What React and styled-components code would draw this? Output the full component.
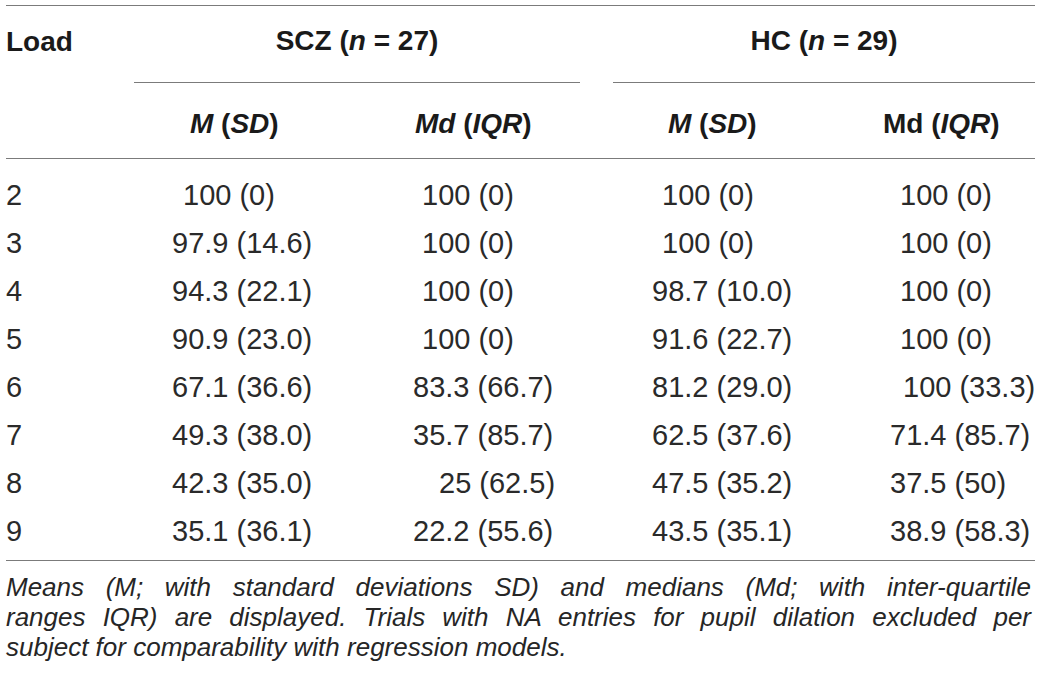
import React from 'react'
import styled, { createGlobalStyle } from 'styled-components'

const GlobalStyle = createGlobalStyle`
    html, body {
        margin: 0;
        padding: 0;
        background-color: #ffffff;
    }
    body {
        font-family: "Liberation Sans", Arial, Helvetica, sans-serif;
        color: #1c1c1c;
    }
`

// grid shared by header and body rows: Load | SCZ M | SCZ Md | gap | HC M | HC Md
const COLS = '128px 223px 223px 33px 211px 211px'

const Page = styled.div`
    width: 1029px;
    padding: 5px 6px 0 6px;
`

const Table = styled.div`
    border-top: 1px solid #7b7b7b;
    border-bottom: 1px solid #7b7b7b;
`

const Head = styled.div`
    display: grid;
    grid-template-columns: ${COLS};
    grid-template-rows: 77px 75px;
    border-bottom: 1px solid #7b7b7b;
    font-size: 28px;
    font-weight: 700;
    color: #1a1a1a;
`

const LoadHead = styled.div`
    display: flex;
    align-items: center;
    padding-bottom: 6px;
`

const Group = styled.div`
    grid-column: ${props => props.$col} / span 2;
    display: flex;
    align-items: center;
    justify-content: center;
    padding-bottom: 6px;
    border-bottom: 1px solid #7b7b7b;
`

const SubHead = styled.div`
    display: flex;
    align-items: center;
    padding-top: 7px;
    padding-left: ${props => props.$pad}px;
    white-space: nowrap;
`

const Body = styled.div`
    padding: 12px 0 5px 0;
`

const Row = styled.div`
    display: grid;
    grid-template-columns: ${COLS};
    height: 48px;
    align-items: center;
    font-size: 29px;
    color: #2a2a2a;
`

const Cell = styled.div`
    padding-left: ${props => props.$pad}px;
    white-space: nowrap;
`

const Note = styled.div`
    margin-top: 11px;
    padding-right: 4px;
    font-size: 26px;
    line-height: 30px;
    font-style: italic;
    color: #262626;
`

const NoteLine = styled.p`
    margin: 0;
    text-align: justify;
    text-align-last: ${props => props.$fill ? 'justify' : 'left'};
    white-space: nowrap;
`

const columns = [
    { head: <><i>M</i> (<i>SD</i>)</>, headPad: 56, dataPad: 38 },
    { head: <><i>Md</i> (<i>IQR</i>)</>, headPad: 58, dataPad: 56 },
    { head: <><i>M</i> (<i>SD</i>)</>, headPad: 55, dataPad: 39 },
    { head: <>Md (<i>IQR</i>)</>, headPad: 59, dataPad: 66 },
]

// each value: [text, extra indent in px]
const rows = [
    ['2', ['100 (0)', 11], ['100 (0)', 9], ['100 (0)', 10], ['100 (0)', 10]],
    ['3', ['97.9 (14.6)', 0], ['100 (0)', 9], ['100 (0)', 10], ['100 (0)', 10]],
    ['4', ['94.3 (22.1)', 0], ['100 (0)', 9], ['98.7 (10.0)', 0], ['100 (0)', 10]],
    ['5', ['90.9 (23.0)', 0], ['100 (0)', 9], ['91.6 (22.7)', 0], ['100 (0)', 10]],
    ['6', ['67.1 (36.6)', 0], ['83.3 (66.7)', 0], ['81.2 (29.0)', 0], ['100 (33.3)', 13]],
    ['7', ['49.3 (38.0)', 0], ['35.7 (85.7)', 0], ['62.5 (37.6)', 0], ['71.4 (85.7)', 0]],
    ['8', ['42.3 (35.0)', 0], ['25 (62.5)', 26], ['47.5 (35.2)', 0], ['37.5 (50)', 0]],
    ['9', ['35.1 (36.1)', 0], ['22.2 (55.6)', 0], ['43.5 (35.1)', 0], ['38.9 (58.3)', 0]],
]

const ValueCell = ({ col, value }) => (
    <Cell $pad={col.dataPad + value[1]}>{value[0]}</Cell>
)

const App = () => {
    return (
        <Page>
            <GlobalStyle />
            <Table>
                <Head>
                    <LoadHead>Load</LoadHead>
                    <Group $col={2}><span>SCZ (<i>n</i> = 27)</span></Group>
                    <div />
                    <Group $col={5}><span>HC (<i>n</i> = 29)</span></Group>
                    <div />
                    <SubHead $pad={columns[0].headPad}><span>{columns[0].head}</span></SubHead>
                    <SubHead $pad={columns[1].headPad}><span>{columns[1].head}</span></SubHead>
                    <div />
                    <SubHead $pad={columns[2].headPad}><span>{columns[2].head}</span></SubHead>
                    <SubHead $pad={columns[3].headPad}><span>{columns[3].head}</span></SubHead>
                </Head>
                <Body>
                    {rows.map(r => (
                        <Row key={r[0]}>
                            <Cell $pad={0}>{r[0]}</Cell>
                            <ValueCell col={columns[0]} value={r[1]} />
                            <ValueCell col={columns[1]} value={r[2]} />
                            <div />
                            <ValueCell col={columns[2]} value={r[3]} />
                            <ValueCell col={columns[3]} value={r[4]} />
                        </Row>
                    ))}
                </Body>
            </Table>
            <Note>
                <NoteLine $fill>Means (M; with standard deviations SD) and medians (Md; with inter-quartile</NoteLine>
                <NoteLine $fill>ranges IQR) are displayed. Trials with NA entries for pupil dilation excluded per</NoteLine>
                <NoteLine>subject for comparability with regression models.</NoteLine>
            </Note>
        </Page>
    )
}

export default App
